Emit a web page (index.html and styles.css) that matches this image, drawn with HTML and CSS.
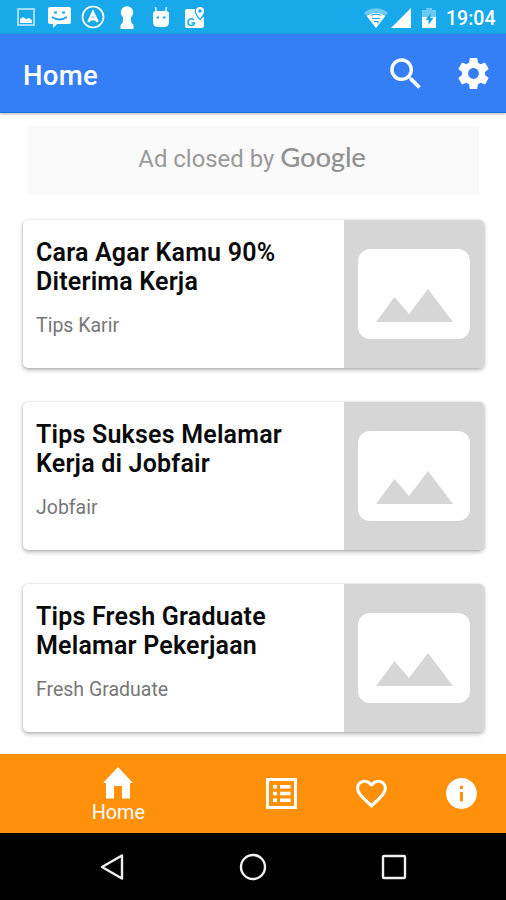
FILE: index.html
```html
<!DOCTYPE html>
<html lang="id">
<head>
    <meta charset="UTF-8">
    <meta name="viewport" content="width=device-width, initial-scale=1.0">
    <title>Home</title>
    <link rel="stylesheet" href="styles.css">
</head>
<body>
    <div class="status-bar">
        <div class="status-left">
            <svg width="18" height="18" viewBox="0 0 18 18"><rect x="1" y="1" width="16" height="16" fill="none" stroke="#b9e6fa" stroke-width="1.7"/><path d="M3 15v-4l3-2 3 2 3-1 3 2v3z" fill="#fff"/></svg>
            <svg width="23" height="21" viewBox="0 0 23 21"><path d="M2 0h19q2 0 2 2v13q0 2-2 2H9l-4 4v-4H2q-2 0-2-2V2q0-2 2-2z" fill="#fff"/><path d="M6 5.500h3M14 5.500h3M4 10q7.500 5 15 0" fill="none" stroke="#18a9ea" stroke-width="1.800"/></svg>
            <svg width="24" height="24" viewBox="0 0 24 24" fill="none" stroke="#fff"><circle cx="12" cy="12" r="10.500" stroke-width="1.700"/><path d="M7.500 17L12 7.500 16.500 17M9 14h6" stroke-width="2.800"/></svg>
            <svg width="14" height="23" viewBox="0 0 14 23" fill="#fff"><circle cx="7" cy="6.500" r="6.200"/><path d="M3.500 9h7l1 8 2 2v4H.5v-4l2-2z"/></svg>
            <svg width="18" height="20" viewBox="0 0 18 20"><path d="M3.500 0l1 5M14.500 0l-1 5" stroke="#d4f0fc" stroke-width="1.500"/><path d="M1 7q0-3 3-3h10q3 0 3 3v8q0 5-5 5H6q-5 0-5-5z" fill="#fff"/><path d="M4.500 10.500h2.500M11 10.500h2.500" stroke="#18a9ea" stroke-width="2"/></svg>
            <svg width="21" height="23" viewBox="0 0 21 23"><path d="M2 3h9l4 10 4-2v9q0 2-2 2H2q-2 0-2-2V5q0-2 2-2z" fill="#fff"/><path d="M9 14a3.400 3.400 0 1 0 .6 3H6.500" fill="none" stroke="#18a9ea" stroke-width="1.600"/><path d="M15 13.500C12 10 10.300 8 10.300 5a4.700 4.700 0 0 1 9.400 0c0 3-1.700 5-4.700 8.500z" fill="#fff" stroke="#18a9ea" stroke-width="1.200"/><circle cx="15" cy="5" r="1.700" fill="#18a9ea"/></svg>
        </div>
        <div class="status-right">
            <svg class="wifi" width="24" height="20" viewBox="0 0 24 20"><path d="M12 20L0 4.500Q12-4 24 4.500z" fill="#6dcaf3"/><path d="M12 20L2.700 8Q7 5 12 5t9.300 3z" fill="#fff"/><path d="M7.500 7.500Q12 5 16.500 7.500M8 10.500h8M10 13.500h4v2" fill="none" stroke="#18a9ea" stroke-width="1.200"/></svg>
            <svg class="signal" width="20" height="20" viewBox="0 0 20 20"><path d="M20 0v20H0z" fill="#fff"/></svg>
            <svg class="battery" width="14" height="20" viewBox="0 0 14 20"><path d="M0 2h4V0h6v2h4v9H0z" fill="#6dcaf3"/><path d="M0 9h14v11H0z" fill="#fff"/><path d="M8.500 5L3.500 12h3v5l5-7h-3z" fill="#18a9ea"/></svg>
            <span class="clock">19:04</span>
        </div>
    </div>

    <header class="app-bar">
        <h1>Home</h1>
        <div class="actions">
            <svg width="42" height="42" viewBox="0 0 24 24" fill="#fff"><path d="M15.500 14h-.79l-.28-.27C15.410 12.590 16 11.110 16 9.500 16 5.910 13.090 3 9.500 3S3 5.910 3 9.500 5.910 16 9.500 16c1.610 0 3.090-.59 4.230-1.570l.27.28v.79l5 4.990L20.490 19l-4.990-5zm-6 0C7.010 14 5 11.990 5 9.500S7.010 5 9.500 5 14 7.010 14 9.500 11.990 14 9.500 14z"/></svg>
            <svg width="37" height="37" viewBox="0 0 24 24" fill="#fff"><path d="M19.430 12.980c.04-.32.07-.64.07-.98s-.03-.66-.07-.98l2.110-1.650c.19-.15.24-.42.12-.64l-2-3.460c-.12-.22-.39-.3-.61-.22l-2.490 1c-.52-.4-1.080-.73-1.690-.98l-.38-2.650C14.460 2.180 14.250 2 14 2h-4c-.25 0-.46.18-.49.42l-.38 2.650c-.61.25-1.170.59-1.690.98l-2.490-1c-.23-.09-.49 0-.61.22l-2 3.460c-.13.22-.07.49.12.64l2.110 1.650c-.04.32-.07.65-.07.98s.03.66.07.98l-2.110 1.650c-.19.15-.24.42-.12.64l2 3.460c.12.22.39.3.61.22l2.490-1c.52.4 1.080.73 1.690.98l.38 2.650c.03.24.24.42.49.42h4c.25 0 .46-.18.49-.42l.38-2.650c.61-.25 1.170-.59 1.690-.98l2.490 1c.23.09.49 0 .61-.22l2-3.460c.12-.22.07-.49-.12-.64l-2.110-1.650zM12 15.500c-1.930 0-3.500-1.570-3.500-3.500s1.570-3.500 3.500-3.500 3.500 1.570 3.500 3.500-1.570 3.500-3.500 3.500z"/></svg>
        </div>
    </header>

    <main class="content">
        <div class="ad"><span class="ad-text">Ad closed by</span><span class="google">Google</span></div>

        <article class="card">
            <div class="card-body">
                <h2>Cara Agar Kamu 90%<br>Diterima Kerja</h2>
                <p>Tips Karir</p>
            </div>
            <div class="thumb">
                <svg width="112" height="90" viewBox="0 0 112 90"><rect width="112" height="90" rx="12" fill="#fff"/><path d="M18 73l18.500-25L51 65l19-25 25 33z" fill="#d6d6d6"/></svg>
            </div>
        </article>

        <article class="card">
            <div class="card-body">
                <h2>Tips Sukses Melamar<br>Kerja di Jobfair</h2>
                <p>Jobfair</p>
            </div>
            <div class="thumb">
                <svg width="112" height="90" viewBox="0 0 112 90"><rect width="112" height="90" rx="12" fill="#fff"/><path d="M18 73l18.500-25L51 65l19-25 25 33z" fill="#d6d6d6"/></svg>
            </div>
        </article>

        <article class="card">
            <div class="card-body">
                <h2>Tips Fresh Graduate<br>Melamar Pekerjaan</h2>
                <p>Fresh Graduate</p>
            </div>
            <div class="thumb">
                <svg width="112" height="90" viewBox="0 0 112 90"><rect width="112" height="90" rx="12" fill="#fff"/><path d="M18 73l18.500-25L51 65l19-25 25 33z" fill="#d6d6d6"/></svg>
            </div>
        </article>
    </main>

    <nav class="tabs">
        <a class="tab active">
            <svg width="30" height="32" viewBox="0 0 30 32" fill="#fff"><path d="M15 0L0 16h3v15.500h8V19h8v12.500h8V16h3z"/></svg>
            <span>Home</span>
        </a>
        <a class="tab">
            <svg width="31" height="31" viewBox="0 0 31 31"><rect x="1.500" y="1.500" width="28" height="28" fill="none" stroke="#fff" stroke-width="3"/><path d="M7 8.700h4M7 15.500h4M7 22.300h4M14 8.700h10.500M14 15.500h10.500M14 22.300h10.500" stroke="#fff" stroke-width="3.600"/></svg>
        </a>
        <a class="tab">
            <svg width="37" height="37" viewBox="0 0 24 24" fill="#fff"><path d="M16.500 3c-1.740 0-3.410.81-4.500 2.090C10.910 3.810 9.240 3 7.500 3 4.420 3 2 5.420 2 8.500c0 3.780 3.400 6.860 8.550 11.540L12 21.350l1.450-1.320C18.600 15.360 22 12.280 22 8.500 22 5.420 19.580 3 16.500 3zm-4.400 15.550l-.1.100-.1-.1C7.140 14.240 4 11.390 4 8.500 4 6.500 5.500 5 7.500 5c1.540 0 3.040.99 3.570 2.360h1.870C13.460 5.990 14.960 5 16.500 5c2 0 3.500 1.500 3.500 3.500 0 2.890-3.140 5.740-7.900 10.050z"/></svg>
        </a>
        <a class="tab">
            <svg width="37" height="37" viewBox="0 0 24 24" fill="#fff"><path d="M12 2C6.480 2 2 6.480 2 12s4.480 10 10 10 10-4.480 10-10S17.520 2 12 2zm1 15h-2v-6h2v6zm0-8h-2V7h2v2z"/></svg>
        </a>
    </nav>

    <div class="system-nav">
        <svg width="26" height="28" viewBox="0 0 26 28"><path d="M3 14L23 2.500v23z"/></svg>
        <svg width="28" height="28" viewBox="0 0 28 28"><circle cx="14" cy="14" r="12"/></svg>
        <svg width="26" height="26" viewBox="0 0 26 26"><rect x="2" y="2" width="22" height="22" rx="1"/></svg>
    </div>
</body>
</html>
```
FILE: styles.css
```css
* {
    box-sizing: border-box;
}
body {
    margin: 0;
    height: 900px;
    display: flex;
    flex-direction: column;
    background: #fff;
    font-family: Roboto, sans-serif;
    overflow: hidden;
}
svg {
    display: block;
    flex: none;
}
h1, h2, p {
    margin: 0;
}
.status-bar {
    height: 34px;
    flex: none;
    display: flex;
    justify-content: space-between;
    align-items: center;
    padding: 0 11px 0 17px;
    background: #18a9ea;
    color: #fff;
}
.status-left {
    display: flex;
    align-items: center;
    gap: 13px;
}
.status-left svg:nth-child(3) {
    margin-left: -3px;
}
.status-left svg:nth-child(4) {
    margin-left: 2px;
}
.status-left svg:nth-child(5) {
    margin-left: 5px;
}
.status-left svg:nth-child(6) {
    margin-left: 2px;
}
.status-right {
    display: flex;
    align-items: center;
}
.wifi {
    margin-top: 2px;
}
.signal {
    margin: 2px 0 0 3px;
}
.battery {
    margin: 2px 10px 0 11px;
}
.clock {
    width: 49px;
    font-size: 19.5px;
    font-weight: 500;
    line-height: 34px;
    padding-top: 3px;
    white-space: nowrap;
}
.app-bar {
    height: 79px;
    flex: none;
    display: flex;
    justify-content: space-between;
    align-items: center;
    padding: 1px 14px 0 23px;
    background: #357ff6;
    border-bottom: 1px solid #1670e0;
    box-shadow: 0 1px 3px rgba(0, 0, 0, .3);
    color: #fff;
}
.app-bar h1 {
    font-size: 27.5px;
    font-weight: 500;
    letter-spacing: .3px;
    padding-top: 3px;
}
.actions {
    display: flex;
    align-items: center;
    gap: 28px;
}
.content {
    height: 641px;
    flex: none;
    padding: 13px 22px 0 23px;
}
.ad {
    height: 69px;
    margin: 0 5px 25px;
    padding-right: 3px;
    display: flex;
    justify-content: center;
    align-items: baseline;
    gap: 6px;
    background: #fafafa;
    color: #999;
    line-height: 61px;
}
.ad-text {
    font-size: 23.9px;
}
.google {
    font-family: Lato, sans-serif;
    font-size: 27.5px;
    font-weight: 500;
    letter-spacing: -.2px;
    color: #929292;
}
.card {
    height: 148px;
    margin-bottom: 34px;
    display: flex;
    background: #fff;
    border-radius: 5px;
    box-shadow: 0 2px 4px rgba(0, 0, 0, .3), 0 0 2px rgba(0, 0, 0, .14);
    overflow: hidden;
}
.card-body {
    flex: 1;
    padding: 18px 0 0 13px;
}
.card h2 {
    font-size: 25px;
    font-weight: 600;
    letter-spacing: .2px;
    line-height: 29px;
    color: #0a0a0a;
    white-space: nowrap;
}
.card p {
    margin-top: 18px;
    font-size: 19.5px;
    line-height: 24px;
    color: #777;
}
.thumb {
    width: 140px;
    display: flex;
    justify-content: center;
    align-items: center;
    background: #d6d6d6;
}
.tabs {
    height: 79px;
    flex: none;
    display: flex;
    align-items: center;
    background: #ff910a;
    color: #fff;
}
.tab {
    width: 90px;
    display: flex;
    flex-direction: column;
    align-items: center;
}
.tab.active {
    width: 237px;
    padding-top: 4px;
}
.tab span {
    font-size: 19.8px;
    line-height: 24px;
    margin-top: 2px;
}
.system-nav {
    height: 67px;
    flex: none;
    display: flex;
    justify-content: center;
    align-items: center;
    gap: 114px;
    background: #000;
    fill: none;
    stroke: #f0f0f0;
    stroke-width: 2.4;
    stroke-linejoin: round;
}
```
